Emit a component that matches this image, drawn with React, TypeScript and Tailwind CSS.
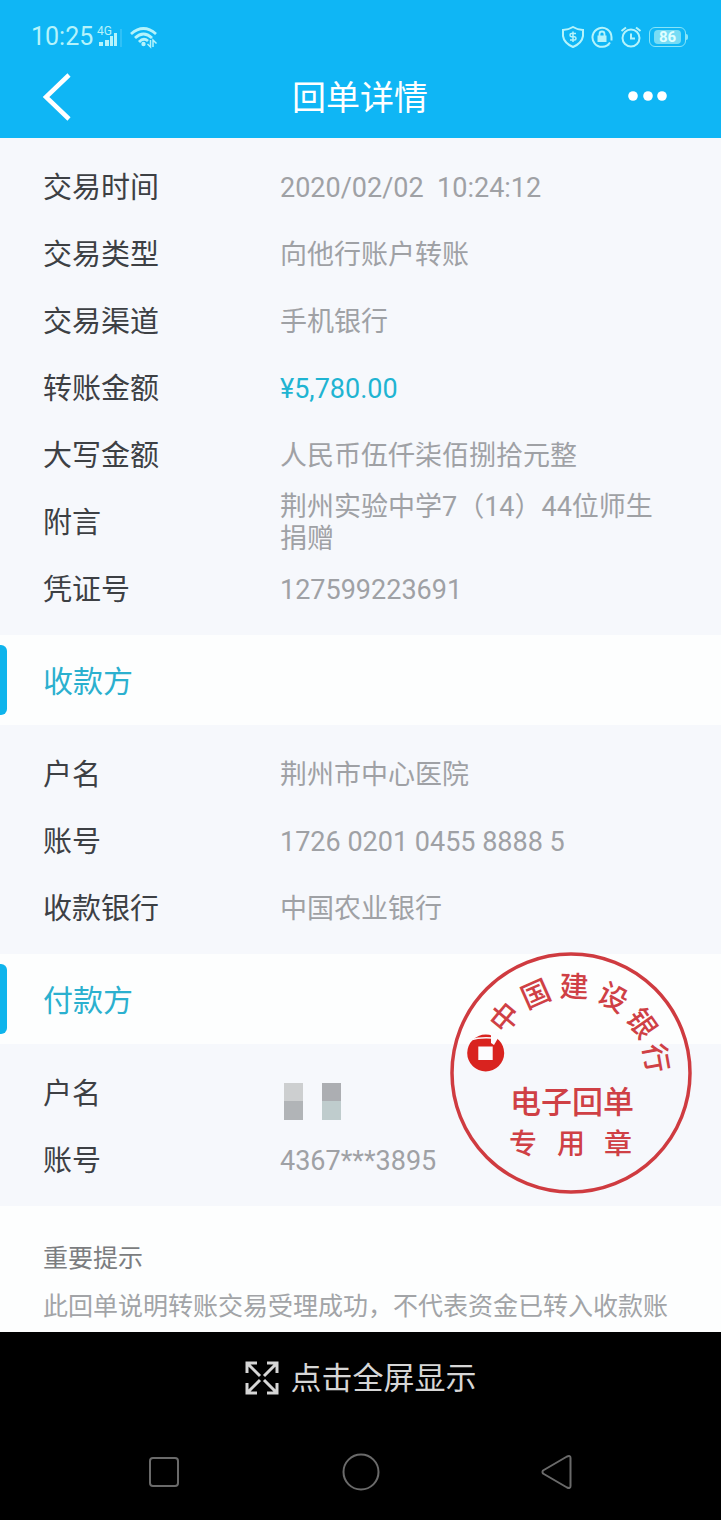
import React from "react";

type Field = { label: string; value: React.ReactNode; accent?: boolean };

const transaction: Field[] = [
  { label: "交易时间", value: "2020/02/02\u00a0 10:24:12" },
  { label: "交易类型", value: "向他行账户转账" },
  { label: "交易渠道", value: "手机银行" },
  { label: "转账金额", value: "¥5,780.00", accent: true },
  { label: "大写金额", value: "人民币伍仟柒佰捌拾元整" },
  { label: "附言", value: "荆州实验中学7（14）44位师生捐赠" },
  { label: "凭证号", value: "127599223691" },
];

const payee: Field[] = [
  { label: "户名", value: "荆州市中心医院" },
  { label: "账号", value: "1726 0201 0455 8888 5" },
  { label: "收款银行", value: "中国农业银行" },
];

const payer: Field[] = [
  { label: "户名", value: <MaskedName /> },
  { label: "账号", value: "4367***3895" },
];

function MaskedName() {
  return (
    <span className="ml-1 mt-4 flex gap-[19px]" role="img" aria-label="已隐藏">
      <span className="block">
        <span className="block h-[18px] w-[19px] bg-[#cdcfd0]" />
        <span className="block h-[19px] w-[19px] bg-[#b1b4b7]" />
      </span>
      <span className="block">
        <span className="block h-[18px] w-[19px] bg-[#acaeb2]" />
        <span className="block h-[19px] w-[19px] bg-[#bfcccd]" />
      </span>
    </span>
  );
}

function Fields({ items }: { items: Field[] }) {
  return (
    <dl className="bg-[#f6f8fc] pt-4 pr-11 pb-3 pl-[43px]">
      {items.map((item) => (
        <div key={item.label} className="flex min-h-[67px] items-center">
          <dt className="w-[237px] shrink-0 text-[29px] leading-8 text-[#3d4044]">{item.label}</dt>
          <dd
            className={
              item.accent
                ? "text-[27px] leading-8 text-[#1fb4d2]"
                : "text-[27px] leading-8 text-[#9fa1a5]"
            }
          >
            {item.value}
          </dd>
        </div>
      ))}
    </dl>
  );
}

function SectionTitle({ children }: { children: React.ReactNode }) {
  return (
    <div className="flex h-[90px] items-center bg-[#fdfefe]">
      <span className="h-[70px] w-[7px] rounded-r-md bg-[#0fb4ec]" />
      <h2 className="ml-9 pt-1 text-[30px] leading-8 text-[#2bb0cf]">{children}</h2>
    </div>
  );
}

const arc = [
  { char: "中", angle: -50 },
  { char: "国", angle: -24 },
  { char: "建", angle: 2 },
  { char: "设", angle: 29 },
  { char: "银", angle: 55 },
  { char: "行", angle: 80 },
];

function Stamp() {
  return (
    <svg
      viewBox="0 0 242 242"
      className="pointer-events-none absolute -top-0.5 right-[29px] w-[242px] font-medium"
      fill="#cf4045"
      textAnchor="middle"
    >
      <circle cx="121" cy="121" r="119" fill="none" stroke="#cf3b40" strokeWidth="3.500" />
      {arc.map(({ char, angle }) => (
        <text key={char} x="121" y="45" fontSize="29" transform={`rotate(${angle} 121 121)`}>
          {char}
        </text>
      ))}
      <circle cx="35.700" cy="101" r="18.500" fill="#d9231f" />
      <path d="M20 88Q30 85 42 86" fill="none" stroke="#fbf8fa" strokeWidth="1.500" />
      <path d="M41 80V91L44 93L47.500 87L50 80Z" fill="#fcfcfe" />
      <path d="M28.300 94.500H42.700V108H28.300Z" fill="#fcfcfe" />
      <text x="122" y="161" fontSize="31">电子回单</text>
      <text x="73" y="202" fontSize="28">专</text>
      <text x="121" y="202" fontSize="28">用</text>
      <text x="168" y="202" fontSize="28">章</text>
    </svg>
  );
}

function StatusBar() {
  return (
    <div className="flex h-[74px] items-center justify-between pr-[33px] pl-[31px] text-[#b5f3fb]">
      <div className="flex items-center">
        <span className="text-[25px] leading-8">10:25</span>
        <svg viewBox="0 0 26 24" className="ml-1 h-6 w-[26px]" fill="currentColor">
          <text x="0" y="10" fontSize="12">4G</text>
          <path d="M2 17h4v4H2zM8 15h4v6H8zM13 11h3v10h-3zM17 8h3v13h-3z" />
          <path d="M24 4v18" stroke="currentColor" strokeOpacity="0.4" />
        </svg>
        <svg viewBox="0 0 30 24" className="ml-1.5 h-6 w-[30px]" fill="none" stroke="currentColor" strokeWidth="2.800">
          <path d="M2 9Q14.500-2 27 9M6 13Q14.500 5 23 13M10 17Q14.500 12 19 16" />
          <circle cx="14.500" cy="19" r="2.200" fill="currentColor" stroke="none" />
          <path d="M21.500 15v7l-3-3M24 22v-7l3.500 3.500" strokeWidth="1.500" />
        </svg>
      </div>
      <div className="flex items-center gap-[7px]">
        <svg viewBox="0 0 22 22" className="size-[22px]" fill="none" stroke="currentColor" strokeWidth="2">
          <path d="M11 1Q15 3.500 21 4V10Q20 17 11 21Q2 17 1 10V4Q7 3.500 11 1Z" />
          <path d="M14 7.500H9.500Q8 7.500 8 9T9.500 10.800H12.500Q14 11 14 12.500T12.500 14H8M11 5.500V16" strokeWidth="1.500" />
        </svg>
        <svg viewBox="0 0 22 22" className="size-[22px]" fill="none" stroke="currentColor" strokeWidth="2">
          <path d="M19 16.500A9.500 9.500 0 1 1 20.500 11V14.500M18 18.500A9.500 9.500 0 0 1 16 19.500" />
          <path d="M8.500 10V8a2.500 2.500 0 0 1 5 0v2" strokeWidth="1.800" />
          <path d="M6.500 9.500h9v6.500h-9z" fill="currentColor" stroke="none" />
        </svg>
        <svg viewBox="0 0 22 22" className="size-[22px]" fill="none" stroke="currentColor" strokeWidth="2">
          <circle cx="11" cy="12" r="8.500" />
          <path d="M11 7.500v5h4M1.500 5L6 1.500M16 1.500L20.500 5" />
        </svg>
        <div className="flex items-center">
          <div className="flex h-5 w-[37px] items-center justify-center rounded-md border border-[#86e4f8] px-1 py-0.5">
            <span className="flex h-3.5 w-full items-center justify-center rounded-sm bg-[#77dcf5] text-[15px] font-bold text-[#e0ffff]">
              86
            </span>
          </div>
          <span className="h-1.5 w-0.5 rounded-r bg-[#86e4f8]" />
        </div>
      </div>
    </div>
  );
}

export default function App() {
  return (
    <div className="flex min-h-screen flex-col bg-black font-['Roboto','Noto_Sans_CJK_SC',sans-serif]">
      <header className="h-[138px] bg-[#0fb6f5]">
        <StatusBar />
        <div className="-mt-1 grid h-[54px] grid-cols-[1fr_auto_1fr] items-center pr-[53px] pl-10 text-white">
          <button aria-label="返回" className="justify-self-start">
            <svg viewBox="0 0 34 50" className="h-[50px] w-[34px]" fill="none" stroke="currentColor" strokeWidth="4.500">
              <path d="M29 3L6 25L29 47" />
            </svg>
          </button>
          <h1 className="pt-0.5 pl-3 text-[34px] leading-10 whitespace-nowrap">回单详情</h1>
          <button aria-label="更多" className="justify-self-end">
            <svg viewBox="0 0 40 12" className="h-3 w-10" fill="currentColor">
              <circle cx="5" cy="5" r="4.800" />
              <circle cx="20" cy="5" r="4.800" />
              <circle cx="34" cy="5" r="4.800" />
            </svg>
          </button>
        </div>
      </header>

      <main className="flex-1 bg-[#fdfefe]">
        <Fields items={transaction} />
        <section>
          <SectionTitle>收款方</SectionTitle>
          <Fields items={payee} />
        </section>
        <section className="relative">
          <SectionTitle>付款方</SectionTitle>
          <Fields items={payer} />
          <Stamp />
        </section>
        <section className="pt-[37px] pr-9 pl-[43px] text-[25px] leading-8">
          <h3 className="text-[#7b7d80]">重要提示</h3>
          <p className="mt-4 text-[#a2a4a7]">此回单说明转账交易受理成功，不代表资金已转入收款账</p>
        </section>
      </main>

      <footer className="h-[188px] bg-black">
        <button className="mx-auto flex h-[92px] items-center gap-3 text-[31px] text-[#d6d6d6]">
          <svg viewBox="0 0 34 34" className="size-[34px]" fill="none" stroke="currentColor" strokeWidth="3">
            <path d="M2 12V2H12M22 2H32V12M32 22V32H22M12 32H2V22M3 3L15 15M31 3L19 15M31 31L19 19M3 31L15 19" />
          </svg>
          <span className="pt-0.5">点击全屏显示</span>
        </button>
        <nav className="flex h-24 items-center justify-between px-[148px] text-[#6a6a6a]">
          <button aria-label="最近任务">
            <svg viewBox="0 0 32 32" className="size-8" fill="none" stroke="currentColor" strokeWidth="2">
              <rect x="2" y="2" width="28" height="28" rx="3" />
            </svg>
          </button>
          <button aria-label="主屏幕">
            <svg viewBox="0 0 38 38" className="size-[38px]" fill="none" stroke="currentColor" strokeWidth="2">
              <circle cx="19" cy="19" r="17.500" />
            </svg>
          </button>
          <button aria-label="返回上一级">
            <svg viewBox="0 0 32 36" className="h-9 w-8" fill="none" stroke="currentColor" strokeWidth="2" strokeLinejoin="round">
              <path d="M2 16.500Q1 18 2 19.500L26 33.500Q29.500 35 29.500 32V4Q29.500 1 26 2.500Z" />
            </svg>
          </button>
        </nav>
      </footer>
    </div>
  );
}
